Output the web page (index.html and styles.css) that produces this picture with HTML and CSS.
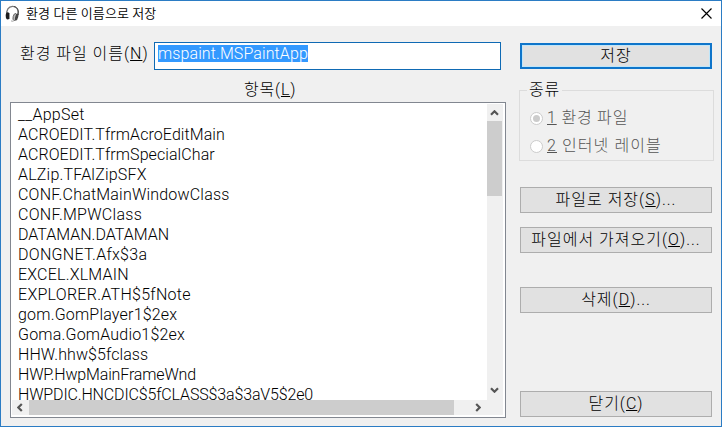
FILE: index.html
```
<!DOCTYPE html>
<html lang="ko">
<head>
<meta charset="utf-8">
<title>환경 다른 이름으로 저장</title>
<link rel="stylesheet" href="styles.css">
</head>
<body>
<div class="window">
  <header class="titlebar">
    <svg class="app-icon" width="16" height="17" viewBox="0 0 16 17" fill="none">
      <path d="M2 10C1 5 3.500 1.500 7.500 1.300S14 4.500 13 10" stroke="#777" stroke-width="1.300"/>
      <path d="M9 1.500C13 2.500 14 6 13 10" stroke="#444" stroke-width="1"/>
      <ellipse cx="2.700" cy="10.800" rx="2" ry="3.600" fill="#1c1c1c"/>
      <path d="M4.500 8v6" stroke="#999" stroke-width="1"/>
      <ellipse cx="10" cy="12" rx="1.900" ry="3.600" transform="rotate(14 10 12)" fill="#bbb" stroke="#555" stroke-width=".8"/>
      <ellipse cx="11.700" cy="12" rx="1.500" ry="3.600" transform="rotate(14 11.700 12)" fill="#444"/>
      <path d="M9 15.500c-1 1-2 .8-3 .3" stroke="#888" stroke-width=".8"/>
    </svg>
    <h1 class="title">환경 다른 이름으로 저장</h1>
    <svg class="close" width="11" height="11" viewBox="0 0 11 11"><path d="M.5.500l10 10M10.500.500l-10 10" stroke="#000" stroke-width="1.150"/></svg>
  </header>
  <main class="body">
    <section class="left">
      <div class="name-row">
        <label class="label">환경 파일 이름(<u>N</u>)</label>
        <div class="input"><span class="selection">mspaint.MSPaintApp</span></div>
      </div>
      <div class="list-label">항목(<u>L</u>)</div>
      <div class="listbox">
        <ul class="items">
          <li class="wider">__AppSet</li>
          <li>ACROEDIT.TfrmAcroEditMain</li>
          <li>ACROEDIT.TfrmSpecialChar</li>
          <li class="wide">ALZip.TFAlZipSFX</li>
          <li class="wide">CONF.ChatMainWindowClass</li>
          <li class="wider">CONF.MPWClass</li>
          <li class="snug">DATAMAN.DATAMAN</li>
          <li class="wider">DONGNET.Afx$3a</li>
          <li class="wide">EXCEL.XLMAIN</li>
          <li class="wider">EXPLORER.ATH$5fNote</li>
          <li class="wide">gom.GomPlayer1$2ex</li>
          <li class="wide">Goma.GomAudio1$2ex</li>
          <li>HHW.hhw$5fclass</li>
          <li class="tight">HWP.HwpMainFrameWnd</li>
          <li class="tight">HWPDIC.HNCDIC$5fCLASS$3a$3aV5$2e0</li>
        </ul>
        <div class="vbar">
          <svg width="9" height="6" viewBox="0 0 9 6"><path d="M1 4.800l3.500-3.500L8 4.800" /></svg>
          <div class="vthumb"></div>
          <svg width="9" height="6" viewBox="0 0 9 6"><path d="M1 1.200l3.500 3.500L8 1.200" /></svg>
        </div>
        <div class="hbar">
          <svg width="6" height="9" viewBox="0 0 6 9"><path d="M4.800 1L1.300 4.500 4.800 8" /></svg>
          <div class="hthumb"></div>
          <svg width="6" height="9" viewBox="0 0 6 9"><path d="M1.200 1l3.500 3.500L1.200 8" /></svg>
        </div>
      </div>
    </section>
    <section class="right">
      <div class="button default">저장</div>
      <fieldset class="group">
        <legend>종류</legend>
        <div class="option"><i class="radio checked"></i><span><u>1</u> 환경 파일</span></div>
        <div class="option second"><i class="radio"></i><span><u>2</u> 인터넷 레이블</span></div>
      </fieldset>
      <div class="button save-file">파일로 저장(<u>S</u>)...</div>
      <div class="button import">파일에서 가져오기(<u>O</u>)...</div>
      <div class="button delete">삭제(<u>D</u>)...</div>
      <div class="button dismiss">닫기(<u>C</u>)</div>
    </section>
  </main>
</div>
</body>
</html>
```
FILE: styles.css
```
* { box-sizing: border-box; }
body {
  margin: 0;
  font: 300 16px/20px Roboto, "Noto Sans CJK KR", sans-serif;
  color: #000;
}
u { text-decoration: underline; text-decoration-thickness: 1px; text-underline-offset: 1px; }
svg { display: block; flex: none; }
.window {
  display: flex;
  flex-direction: column;
  width: 722px;
  height: 427px;
  border: 1px solid #2b7cc4;
  background: #f0f0f0;
  overflow: hidden;
}
.titlebar {
  display: flex;
  align-items: center;
  height: 25px;
  padding: 0 9px 0 4px;
  background: #fff;
}
.close { margin-bottom: 1px; }
.title {
  flex: 1;
  margin: 0 0 0 5px;
  font-size: 13px;
  font-weight: 350;
  letter-spacing: .1px;
}
.body {
  flex: 1;
  display: grid;
  grid-template-columns: 496px 195px;
  column-gap: 13px;
  padding: 16px 0 0 9px;
}
.left { display: flex; flex-direction: column; }
.name-row { display: flex; padding-right: 5px; }
.label { width: 144px; padding-left: 10px; line-height: 24px; white-space: nowrap; letter-spacing: .98px; }
.input {
  flex: 1;
  height: 28px;
  border: 1px solid #0f6ab4;
  background: #fff;
  padding: 2px 3px;
  line-height: 17px;
}
.selection { display: inline-block; height: 17px; background: #3399ff; color: #fff; letter-spacing: .1px; }
.list-label { height: 32px; padding: 10px 0 0 234px; letter-spacing: .8px; }
.listbox {
  display: grid;
  grid-template: 297px 15px / 1fr 16px;
  height: 316px;
  border: 1px solid #828790;
  background: #fff;
  padding: 0 2px 2px 1px;
}
.items { margin: 0; padding: 2px 0 0 6px; list-style: none; overflow: hidden; white-space: nowrap; letter-spacing: .08px; }
.items .wide { letter-spacing: .2px; }
.items .wider { letter-spacing: .28px; }
.items .snug { letter-spacing: 0; }
.items .tight { letter-spacing: -.15px; }
.vbar {
  display: flex;
  flex-direction: column;
  align-items: center;
  background: #f0f0f0;
  padding: 6px 1px 7px 0;
  margin-top: 1px;
}
.vbar svg:last-child { margin-top: auto; }
.vthumb { width: 15px; height: 75px; margin-top: 5px; background: #cdcdcd; }
.hbar {
  grid-column: 1 / 3;
  display: flex;
  align-items: center;
  background: #f0f0f0;
  padding: 0 22px 0 5px;
}
.hthumb { width: 425px; height: 15px; margin: 0 auto 0 6px; background: #cdcdcd; }
.vbar path, .hbar path { fill: none; stroke: #555; stroke-width: 2.2; }
.right { display: flex; flex-direction: column; }
.button {
  display: flex;
  align-items: center;
  justify-content: center;
  white-space: pre;
  width: 192px;
  height: 26px;
  margin-left: 1px;
  border: 1px solid #adadad;
  background: #e1e1e1;
  letter-spacing: 1px;
}
.default { border: 2px solid #0f75ca; box-shadow: inset 0 0 0 1px #bfe6fa; }
.button.default { margin-top: 1px; }
.group {
  height: 81px;
  margin: 11px 0 0;
  padding: 0 0 0 10px;
  border: 1px solid #dcdcdc;
  letter-spacing: .8px;
}
.group legend { height: 20px; padding: 0 2px; margin-left: -3px; }
.option { display: flex; align-items: center; height: 28px; color: #555; white-space: nowrap; }
.option:first-of-type { margin-top: 4px; }
.second { letter-spacing: 1.1px; }
.radio {
  display: flex;
  width: 13px;
  height: 13px;
  margin-right: 4px;
  border: 1px solid #ccc;
  border-radius: 50%;
  background: #fff;
}
.checked::before { content: ""; width: 7px; height: 7px; margin: 2px; border-radius: 50%; background: #ccc; }
.save-file { margin-top: 26px; }
.import { margin-top: 14px; }
.delete { margin-top: 34px; }
.dismiss { margin-top: 78px; }
```
